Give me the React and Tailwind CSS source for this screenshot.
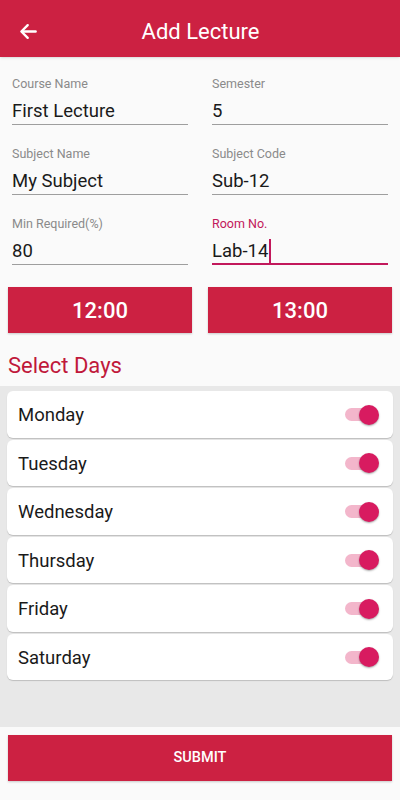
import { useState } from "react";

const DAYS = ["Monday", "Tuesday", "Wednesday", "Thursday", "Friday", "Saturday"];

const Field = ({ label, value, focused }) => (
    <div className="flex flex-col">
        <label className={`text-[12.5px] leading-[16px] ${focused ? "text-[#c2185b]" : "text-[#8a8a8a]"}`}>{label}</label>
        <div
            className={`mt-[8px] h-[25px] text-[18.5px] leading-[22px] text-[#1a1a1a] flex items-start ${focused ? "border-b-2 border-[#c2185b]" : "border-b border-[#9e9e9e]"
                }`}
        >
            {value}
            {focused && <span className="ml-[1px] mt-[-1px] w-[2px] h-[24px] bg-[#c2185b]"></span>}
        </div>
    </div>
);

const Toggle = ({ on }) => (
    <div className="relative w-[36px] h-[20px] flex items-center">
        <div className={`absolute left-[2px] right-[2px] h-[13px] rounded-full ${on ? "bg-[#f3b6cb]" : "bg-gray-300"}`}></div>
        <div
            className={`absolute w-[20px] h-[20px] rounded-full shadow-[0_1px_2px_rgba(0,0,0,0.35)] ${on ? "right-0 bg-[#d81b60]" : "left-0 bg-white"}`}
        ></div>
    </div>
);

export default function App() {
    const [days, setDays] = useState(DAYS.map(() => true));

    return (
        <div className="w-[400px] h-[800px] bg-[#fafafa] flex flex-col font-['Roboto',sans-serif]">
            {/* Toolbar */}
            <div className="h-[57px] bg-[#cc2142] flex items-center relative shadow-sm">
                <svg className="absolute left-[19px] top-[22px]" width="19" height="19" viewBox="0 0 24 24" fill="none" stroke="white" strokeWidth="3" strokeLinecap="round" strokeLinejoin="round">
                    <path d="M21 12H4" />
                    <path d="M11 4l-8 8 8 8" />
                </svg>
                <h1 className="flex-1 text-center text-white text-[22px] pt-[6px] pl-[1px]">Add Lecture</h1>
            </div>

            {/* Form */}
            <div className="grid grid-cols-2 gap-x-[24px] gap-y-[21px] px-[12px] pt-[19px]">
                <Field label="Course Name" value="First Lecture" />
                <Field label="Semester" value="5" />
                <Field label="Subject Name" value="My Subject" />
                <Field label="Subject Code" value="Sub-12" />
                <Field label="Min Required(%)" value="80" />
                <Field label="Room No." value="Lab-14" focused />
            </div>

            {/* Time buttons */}
            <div className="grid grid-cols-2 gap-[16px] px-[8px] mt-[22px]">
                <button className="h-[46px] bg-[#cc2142] text-white text-[22px] font-medium shadow-[0_1px_2px_rgba(0,0,0,0.2)]">12:00</button>
                <button className="h-[46px] bg-[#cc2142] text-white text-[22px] font-medium shadow-[0_1px_2px_rgba(0,0,0,0.2)]">13:00</button>
            </div>

            <h2 className="px-[8px] mt-[19px] h-[34px] text-[22px] leading-[28px] text-[#c0183a]">Select Days</h2>

            {/* Days list */}
            <div className="bg-[#e8e8e8] h-[341px] px-[7px] pt-[5px] flex flex-col gap-[2px]">
                {DAYS.map((d, i) => (
                    <div
                        key={d}
                        onClick={() => setDays(days.map((v, j) => (j === i ? !v : v)))}
                        className="h-[46.5px] bg-white rounded-[6px] shadow-[0_1px_1px_rgba(0,0,0,0.18)] flex items-center justify-between pl-[11px] pr-[14px] cursor-pointer"
                    >
                        <span className="text-[18.5px] text-[#1a1a1a] pt-[4px]">{d}</span>
                        <div className="pt-[1px]">
                            <Toggle on={days[i]} />
                        </div>
                    </div>
                ))}
            </div>

            {/* Submit */}
            <div className="px-[8px] mt-[8px]">
                <button className="w-full h-[46px] bg-[#cc2142] text-white text-[14.5px] font-medium shadow-[0_1px_2px_rgba(0,0,0,0.2)]">
                    SUBMIT
                </button>
            </div>
        </div>
    );
}
